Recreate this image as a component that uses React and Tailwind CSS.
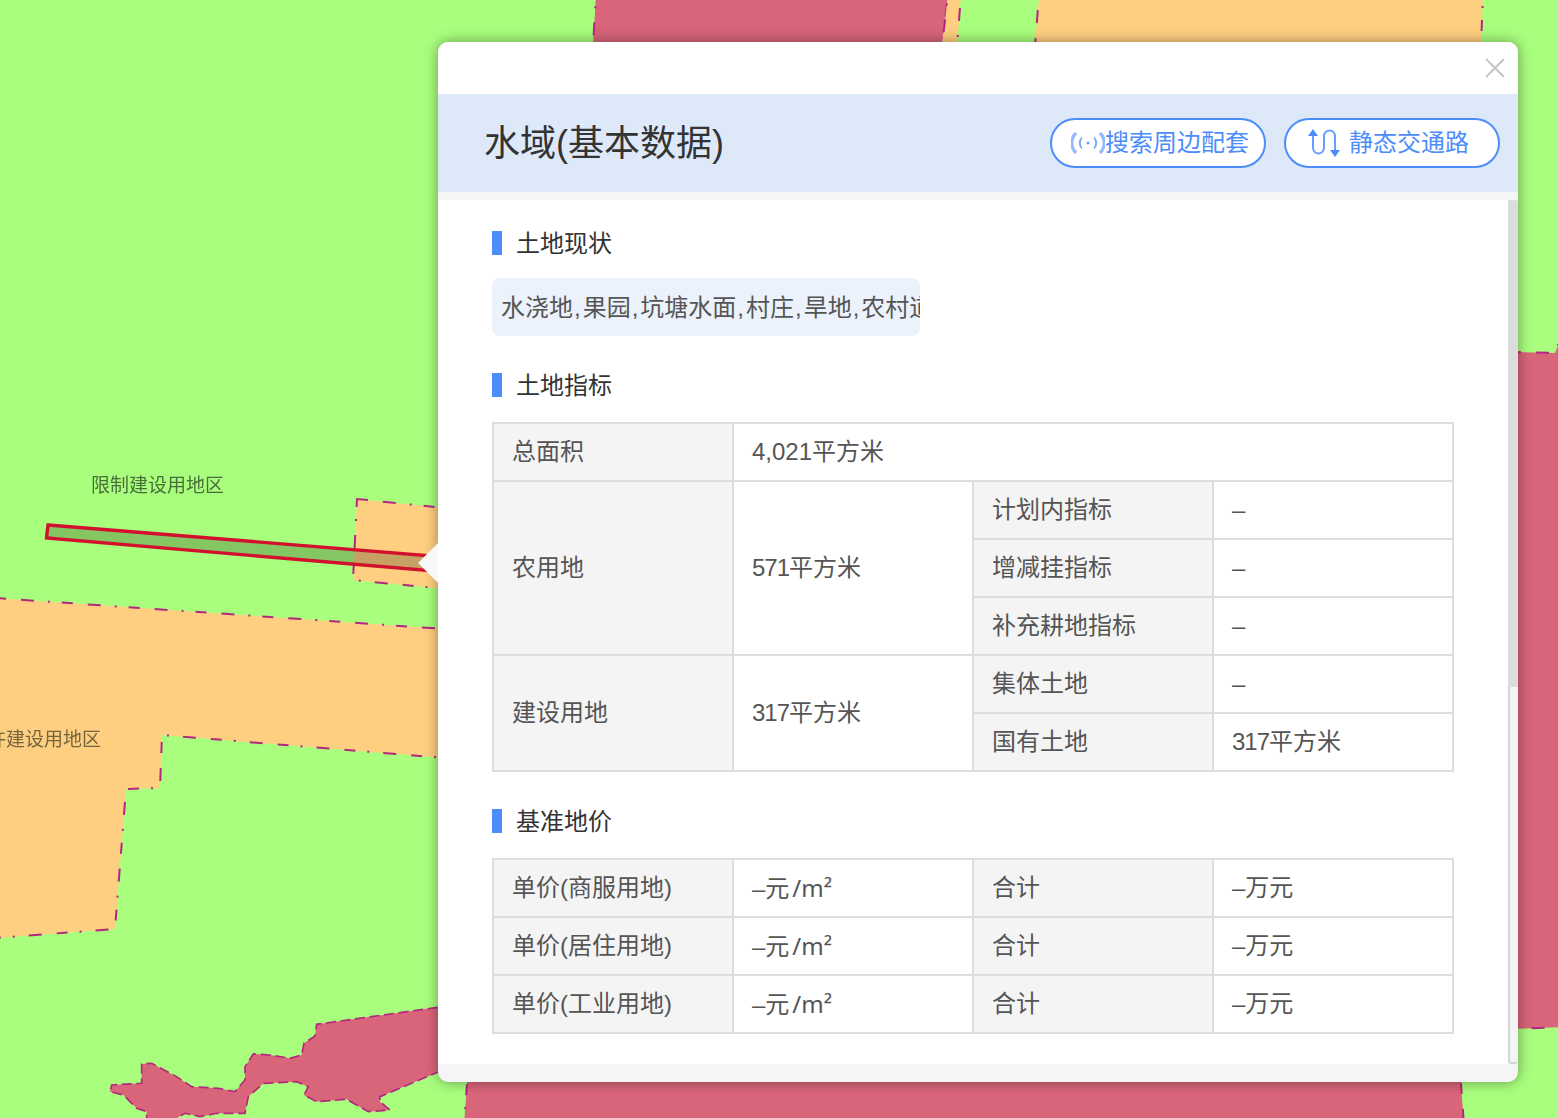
const FONT = 'font-["Liberation_Sans","Noto_Sans_CJK_SC",sans-serif]';

function MapLayer() {
  const dash = { stroke: "#b3277f", strokeWidth: 2, strokeDasharray: "11 15 13 14 2 12" };
  return (
    <svg className="absolute inset-0" width="1558" height="1118" viewBox="0 0 1558 1118">
      <rect width="1558" height="1118" fill="#a9fe7e" />
      <polygon points="596,-5 948,-5 942,46 593,46" fill="#d9657a" {...dash} />
      <polygon points="948,-5 961,-5 957,46 942,46" fill="#fecf80" {...dash} />
      <polygon points="1039,-5 1483,-5 1481,46 1035,46" fill="#fecf80" {...dash} />
      <polygon points="1510,352 1555,353 1558,345 1565,345 1565,1027 1510,1029" fill="#d9657a" {...dash} />
      <polygon points="468,1070 1460,1070 1464,1125 464,1125" fill="#d9657a" {...dash} />
      <polygon points="357,499 445,508 445,589 353,580" fill="#fecf80" {...dash} />
      <polygon points="-5,598 445,629 445,758 162,735 160,788 126,789 115,929 -5,938" fill="#fecf80" {...dash} />
      <g transform="translate(0 780) scale(0.3333)">
        <polygon
          points="1400,670 950,733 945,768 912,790 905,825 870,835 810,825 760,822 735,860 735,900 705,935 655,925 575,920 530,890 455,850 425,852 425,910 335,915 330,935 370,945 410,985 440,995 440,1030 520,1020 555,1000 600,1010 650,1000 735,1000 745,950 790,910 890,905 925,920 912,945 950,965 1040,958 1105,995 1170,990 1140,965 1140,950 1400,840"
          fill="#d9657a"
          stroke="#b3277f"
          strokeWidth="5"
          strokeDasharray="30 14"
        />
      </g>
      <polygon points="48,525 445,557 445,572 46.5,538" fill="#000" fillOpacity="0.22" stroke="#d2102e" strokeWidth="3.4" />
    </svg>
  );
}

function BroadcastIcon() {
  return (
    <svg width="34" height="24" viewBox="0 0 34 24" fill="none" stroke="#4d8dfb">
      <circle cx="17" cy="12" r="1.5" fill="#4d8dfb" stroke="none" opacity="0.85" />
      <path d="M11 6.5a8 8 0 0 0 0 11M23 6.5a8 8 0 0 1 0 11" strokeWidth="1.8" opacity="0.8" />
      <path d="M5 2a14 14 0 0 0 0 20M29 2a14 14 0 0 1 0 20" strokeWidth="3.2" opacity="0.6" />
    </svg>
  );
}

function RouteIcon() {
  return (
    <svg width="32" height="30" viewBox="0 0 32 30" fill="none">
      <path d="M5 6V20a5.5 5.5 0 0 0 11 0V8a5.5 5.5 0 0 1 11 0V24" stroke="#4d8dfb" strokeWidth="2" opacity="0.85" />
      <path d="M0 8 5 1l5 7zM22 22l5 7 5-7z" fill="#4d8dfb" />
    </svg>
  );
}

function Heading({ children, className = "" }) {
  return (
    <div className={"flex items-center h-6 " + className}>
      <span className="w-[10px] h-6 bg-[#4d8dfb]" />
      <span className="ml-[14px] mt-[2px] text-2xl leading-6 text-[#333333]">{children}</span>
    </div>
  );
}

const L = ({ children, rowSpan }) => (
  <td rowSpan={rowSpan} className="h-[58px] border-2 border-[#dddddd] bg-[#f4f4f4] pl-[18px] text-2xl leading-6 text-[#555555]">
    {children}
  </td>
);
const V = ({ children, rowSpan, colSpan }) => (
  <td rowSpan={rowSpan} colSpan={colSpan} className="h-[58px] border-2 border-[#dddddd] bg-white pl-[18px] text-2xl leading-6 text-[#555555]">
    {children}
  </td>
);

function Cols() {
  return (
    <colgroup>
      <col className="w-[240px]" />
      <col className="w-[240px]" />
      <col className="w-[240px]" />
      <col className="w-[240px]" />
    </colgroup>
  );
}

function PriceRow({ name }) {
  return (
    <tr>
      <L>{name}</L>
      <V>
        –元<span className='mx-[3px] font-["Noto_Sans"]'>/m²</span>
      </V>
      <L>合计</L>
      <V>–万元</V>
    </tr>
  );
}

const Comma = () => <span className="ml-[1px] mr-[2px]">,</span>;
const Num = ({ children }) => <span className="tracking-[-1px]">{children}</span>;

export default function App() {
  return (
    <div className={"relative w-[1558px] h-[1118px] overflow-hidden " + FONT}>
      <MapLayer />
      <div className="absolute left-[91px] top-[474px] text-[19px] leading-6 text-[#4a6e3a] blur-[0.4px] whitespace-nowrap">限制建设用地区</div>
      <div className="absolute left-[-32px] top-[728px] text-[19px] leading-6 text-[#75653f] blur-[0.4px] whitespace-nowrap">允许建设用地区</div>

      <div className="absolute left-[438px] top-[42px] w-[1080px] h-[1040px] rounded-[10px] bg-[#f5f5f5] shadow-[0_0_14px_rgba(0,0,0,0.4)] flex flex-col">
        <div className="absolute left-[-20px] top-[501px] w-0 h-0 border-y-[20px] border-y-transparent border-r-[20px] border-r-[#f8f8f8]" />
        <div className="h-[52px] bg-white rounded-t-[10px] flex justify-end items-start pt-4 pr-[13px]">
          <svg width="20" height="20" viewBox="0 0 20 20" stroke="#c5c5c5" strokeWidth="2" fill="none">
            <path d="M1 1l18 18M19 1 1 19" />
          </svg>
        </div>
        <div className="h-[98px] bg-[#dde8f9] flex items-center justify-between pl-[46px] pr-[18px]">
          <span className="mt-[2px] text-4xl leading-10 text-[#333333]">水域(基本数据)</span>
          <div className="flex gap-[18px]">
            <button className="w-[216px] h-[50px] rounded-[25px] border-2 border-[#4d8dfb] bg-white flex items-center pl-[19px] text-2xl text-[#4d8dfb]">
              <BroadcastIcon />
              <span>搜索周边配套</span>
            </button>
            <button className="w-[216px] h-[50px] rounded-[25px] border-2 border-[#4d8dfb] bg-white flex items-center pl-[22px] text-2xl text-[#4d8dfb]">
              <RouteIcon />
              <span className="ml-[9px]">静态交通路</span>
            </button>
          </div>
        </div>
        <div className="h-2" />
        <div className="relative h-[864px] bg-white pl-[54px] pt-[31px]">
          <Heading>土地现状</Heading>
          <div className="mt-[23px] w-[428px] h-[58px] rounded-lg bg-[#ebf2fb] pl-[9px] pt-[1px] text-2xl leading-[58px] text-[#555555] overflow-hidden whitespace-nowrap">
            水浇地<Comma />果园<Comma />坑塘水面<Comma />村庄<Comma />旱地<Comma />农村道路
          </div>
          <Heading className="mt-[37px]">土地指标</Heading>
          <table className="mt-[25px] w-[962px] border-collapse table-fixed">
            <Cols />
            <tbody>
              <tr>
                <L>总面积</L>
                <V colSpan={3}>4,021平方米</V>
              </tr>
              <tr>
                <L rowSpan={3}>农用地</L>
                <V rowSpan={3}><Num>571</Num>平方米</V>
                <L>计划内指标</L>
                <V>–</V>
              </tr>
              <tr>
                <L>增减挂指标</L>
                <V>–</V>
              </tr>
              <tr>
                <L>补充耕地指标</L>
                <V>–</V>
              </tr>
              <tr>
                <L rowSpan={2}>建设用地</L>
                <V rowSpan={2}><Num>317</Num>平方米</V>
                <L>集体土地</L>
                <V>–</V>
              </tr>
              <tr>
                <L>国有土地</L>
                <V><Num>317</Num>平方米</V>
              </tr>
            </tbody>
          </table>
          <Heading className="mt-[37px]">基准地价</Heading>
          <table className="mt-[25px] w-[962px] border-collapse table-fixed">
            <Cols />
            <tbody>
              <PriceRow name="单价(商服用地)" />
              <PriceRow name="单价(居住用地)" />
              <PriceRow name="单价(工业用地)" />
            </tbody>
          </table>
          <div className="absolute right-0 top-0 bottom-0 w-[10px] bg-[#f4f4f4] border-l-2 border-b-2 border-l-[#d4d4d4] border-b-[#d4d4d4] rounded-b-[3px]">
            <div className="h-[487px] w-[10px] -ml-[2px] rounded-t-[3px] bg-[#dcdcdc]" />
          </div>
        </div>
      </div>
    </div>
  );
}
